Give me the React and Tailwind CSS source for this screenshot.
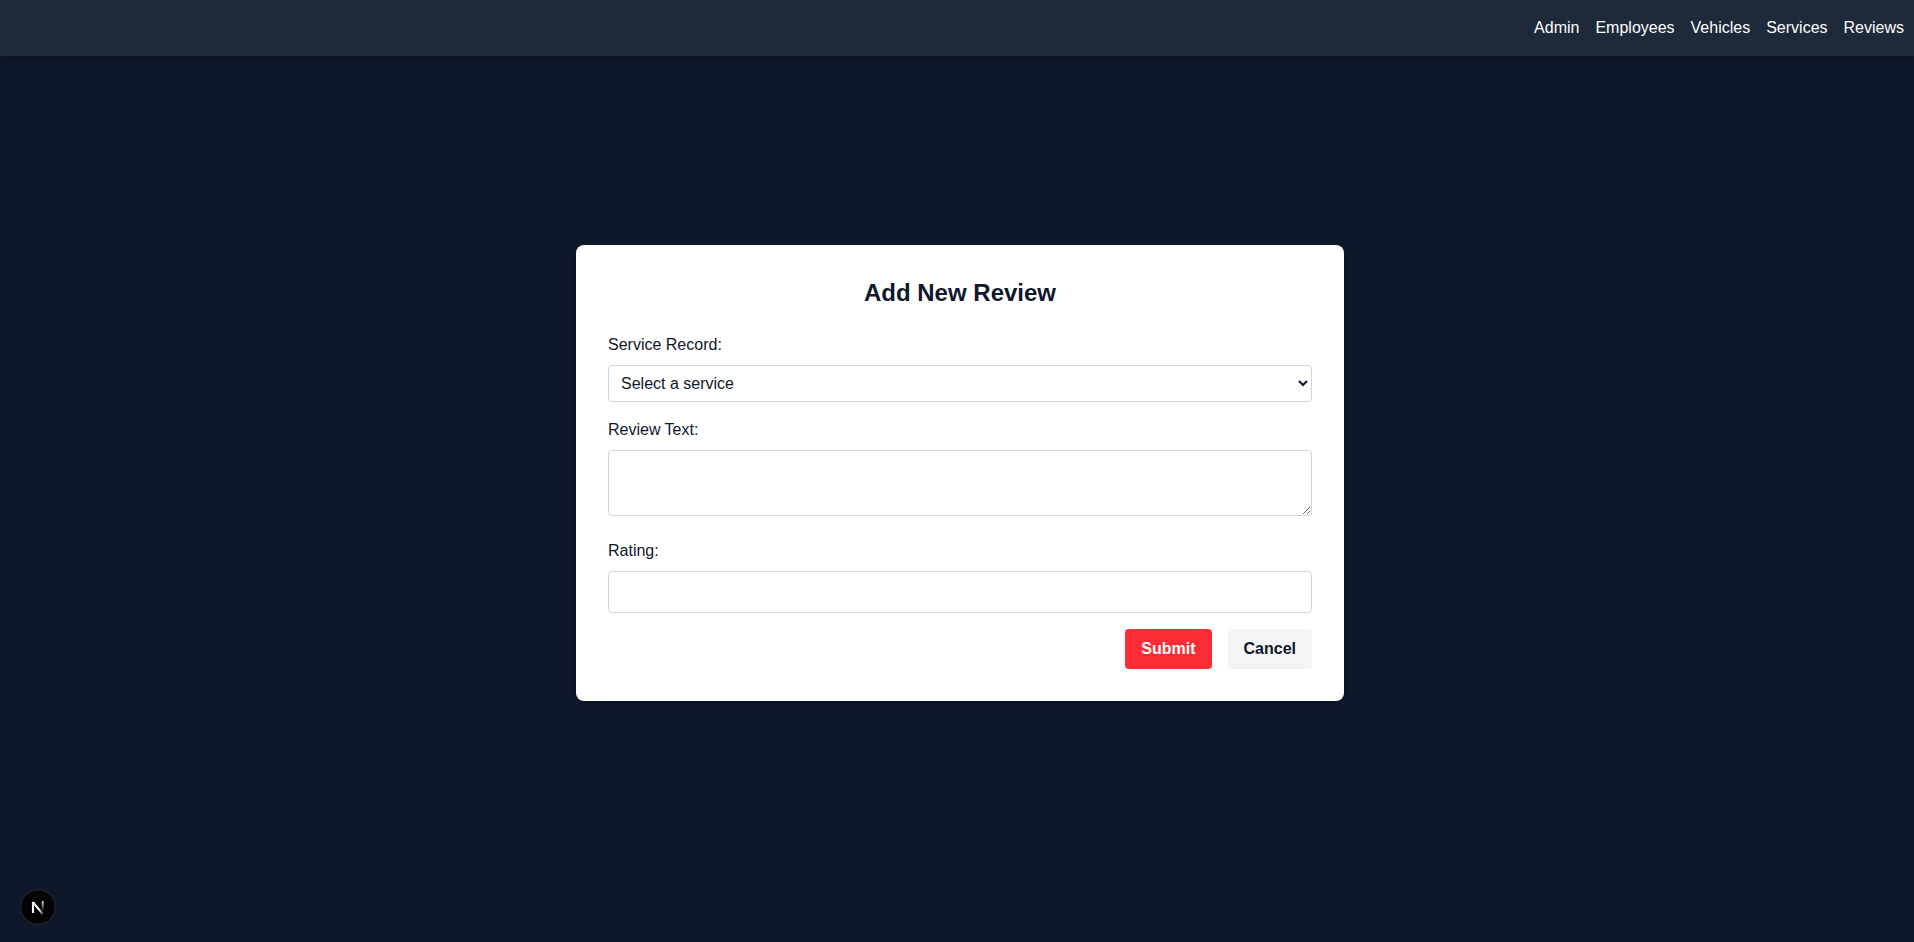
const links = ["Admin", "Employees", "Vehicles", "Services", "Reviews"];

export default function App() {
  return (
    <div className="flex min-h-screen flex-col bg-[#0f172a] font-['Liberation_Sans',Arial,sans-serif] text-base text-[#0f172a]">
      <header className="flex justify-end bg-[#1e2939] p-4 pr-[10px] text-white shadow-md">
        <nav className="flex gap-4">
          {links.map((name) => (
            <a key={name} href={"#" + name.toLowerCase()}>
              {name}
            </a>
          ))}
        </nav>
      </header>

      <main className="flex flex-1 items-center justify-center pb-[52px] pl-[6px]">
        <form className="w-full max-w-3xl rounded-lg bg-white p-8 shadow-md">
          <h1 className="mb-6 text-center text-2xl font-bold">Add New Review</h1>
          <div className="mb-4">
            <label htmlFor="service" className="mb-2 block">Service Record:</label>
            <select id="service" className="block w-full rounded border border-gray-300 bg-white p-2">
              <option>Select a service</option>
            </select>
          </div>
          <div className="mb-4">
            <label htmlFor="review" className="mb-2 block">Review Text:</label>
            <textarea id="review" rows={2} className="w-full rounded border border-gray-300 p-2" />
          </div>
          <div className="mb-4">
            <label htmlFor="rating" className="mb-2 block">Rating:</label>
            <input id="rating" type="number" className="block w-full rounded border border-gray-300 p-2" />
          </div>
          <div className="flex justify-end gap-4">
            <button type="submit" className="rounded bg-[#fb2c36] px-4 py-2 font-bold text-white">Submit</button>
            <button type="button" className="rounded bg-gray-100 px-4 py-2 font-bold">Cancel</button>
          </div>
        </form>
      </main>

      <button
        type="button"
        aria-label="Developer tools"
        className="fixed bottom-[17px] left-5 size-9 rounded-full"
      >
        <svg width="36" height="36" viewBox="0 0 36 36" fill="none">
          <defs>
            <linearGradient id="diagonal" x1="13" y1="12" x2="23" y2="25" gradientUnits="userSpaceOnUse">
              <stop offset="0.6" stopColor="white" />
              <stop offset="1" stopColor="white" stopOpacity="0.3" />
            </linearGradient>
            <linearGradient id="stem" x1="22" y1="12" x2="22" y2="22" gradientUnits="userSpaceOnUse">
              <stop stopColor="white" stopOpacity="0.9" />
              <stop offset="1" stopColor="white" stopOpacity="0" />
            </linearGradient>
          </defs>
          <circle cx="18" cy="18" r="17.3" fill="#030406" stroke="#202123" strokeWidth="1.4" />
          <path d="M13 24V13.2L22.6 25" stroke="url(#diagonal)" strokeWidth="2.1" strokeLinejoin="bevel" />
          <rect x="21.7" y="12.2" width="2" height="10" fill="url(#stem)" />
        </svg>
      </button>
    </div>
  );
}
